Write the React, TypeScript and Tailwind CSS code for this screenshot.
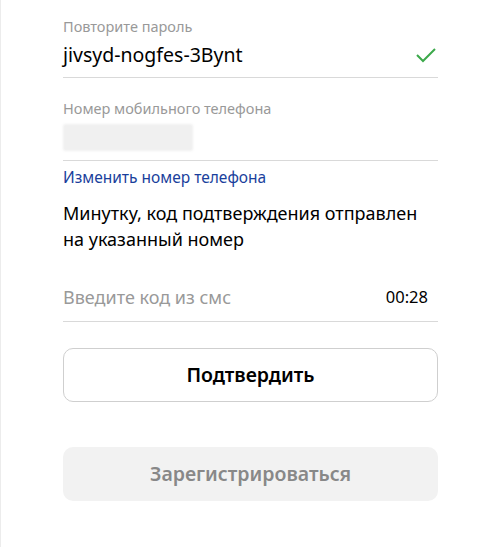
import React from "react";

export default function App() {
  return (
    <div
      className="w-[499px] h-[547px] bg-white border-l border-[#ececec] overflow-hidden"
      style={{ fontFamily: '"Noto Sans", "Open Sans", Arial, sans-serif' }}
    >
      <div className="ml-[62px] w-[375px] pt-[17px]">
        <div className="text-[14.5px] leading-[18px] text-[#999]">Повторите пароль</div>
        <div className="flex items-center justify-between h-[30px] mt-[5px] border-b border-[#d9d9d9] pb-[7px] box-content">
          <span className="text-[19.5px] text-black">jivsyd-nogfes-3Bynt</span>
          <svg width="22" height="18" viewBox="0 0 22 18" className="mr-[1px]">
            <path d="M2 9 L8 15 L20 3" fill="none" stroke="#3ca94b" strokeWidth="2" />
          </svg>
        </div>
        <div className="text-[14.5px] leading-[18px] text-[#999] mt-[21px]">Номер мобильного телефона</div>
        <div className="h-[44px] border-b border-[#d9d9d9] pt-[7px]">
          <div className="w-[130px] h-[27px] bg-[#f0f0f0] rounded-[2px] blur-[1px]" />
        </div>
        <div className="text-[15.5px] leading-[18px] text-[#1a3f9c] mt-[7px]">Изменить номер телефона</div>
        <div className="text-[18px] leading-[26px] text-black mt-[14px]">
          Минутку, код подтверждения отправлен
          <br />
          на указанный номер
        </div>
        <div className="flex items-center justify-between h-[48px] mt-[22px] border-b border-[#d9d9d9]">
          <span className="text-[18px] text-[#999]">Введите код из смс</span>
          <span className="text-[16.5px] text-black mr-[10px]">00:28</span>
        </div>
        <button className="mt-[26px] w-full h-[54px] rounded-[10px] border border-[#cfcfcf] bg-white text-[19.5px] font-semibold text-black">
          Подтвердить
        </button>
        <button className="mt-[45px] w-full h-[54px] rounded-[10px] bg-[#f2f2f2] text-[19.5px] font-semibold text-[#888]">
          Зарегистрироваться
        </button>
      </div>
    </div>
  );
}
